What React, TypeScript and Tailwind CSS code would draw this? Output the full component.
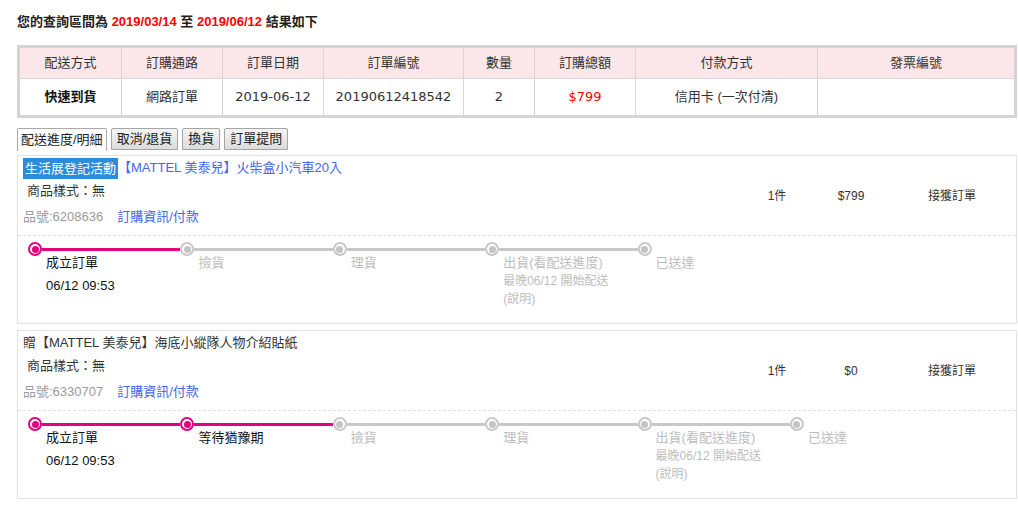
import React from 'react';

type Step = { label: string; active: boolean; extra?: string[]; date?: string };

interface OrderItem {
  badge?: string;
  prefix?: string;
  title: string;
  sku: string;
  qty: string;
  price: string;
  status: string;
  steps: Step[];
}

const SANS = "font-['Liberation_Sans','Noto_Sans_CJK_TC',sans-serif]";
const TABLE_FONT = "font-['DejaVu_Sans','Noto_Sans_CJK_TC',sans-serif]";

const shipSteps = (done: string[]): Step[] => [
  ...done.map((label, i) => ({ label, active: true, date: i === 0 ? '06/12 09:53' : undefined })),
  { label: '撿貨', active: false },
  { label: '理貨', active: false },
  { label: '出貨(看配送進度)', active: false, extra: ['最晚06/12 開始配送', '(說明)'] },
  { label: '已送達', active: false },
];

const items: OrderItem[] = [
  {
    badge: '生活展登記活動',
    title: '【MATTEL 美泰兒】火柴盒小汽車20入',
    sku: '品號:6208636',
    qty: '1件',
    price: '$799',
    status: '接獲訂單',
    steps: shipSteps(['成立訂單']),
  },
  {
    prefix: '贈',
    title: '【MATTEL 美泰兒】海底小縱隊人物介紹貼紙',
    sku: '品號:6330707',
    qty: '1件',
    price: '$0',
    status: '接獲訂單',
    steps: shipSteps(['成立訂單', '等待猶豫期']),
  },
];

const headers = ['配送方式', '訂購通路', '訂單日期', '訂單編號', '數量', '訂購總額', '付款方式', '發票編號'];

const Dot: React.FC<{ on: boolean }> = ({ on }) => (
  <div
    className={`w-[14px] h-[14px] shrink-0 rounded-full border-2 bg-white flex items-center justify-center ${
      on ? 'border-[#e4007f]' : 'border-[#c8c8c8]'
    }`}
  >
    <div className={`w-[7px] h-[7px] rounded-full ${on ? 'bg-[#e4007f]' : 'bg-[#c4c4c4]'}`} />
  </div>
);

const Timeline: React.FC<{ steps: Step[] }> = ({ steps }) => (
  <div className="flex pl-[10px] pt-[6px] h-[87px]">
    {steps.map((s, i) => (
      <div key={i} className="w-[152.4px] shrink-0 flex flex-col">
        <div className="flex items-center h-[14px]">
          <Dot on={s.active} />
          {i < steps.length - 1 && (
            <div className={`flex-1 h-[3px] ${s.active ? 'bg-[#e4007f]' : 'bg-[#c8c8c8]'}`} />
          )}
        </div>
        <div className="pl-[18px] -mt-[2px] text-[13px] leading-[18px]">
          <div className={s.active ? 'text-[#111]' : 'text-[#bdbdbd]'}>{s.label}</div>
          {s.extra?.map(t => (
            <div key={t} className="text-[#bdbdbd] text-[12px]">
              {t}
            </div>
          ))}
          {s.date && <div className="mt-[5px] text-[#111]">{s.date}</div>}
        </div>
      </div>
    ))}
  </div>
);

const ItemCard: React.FC<{ item: OrderItem }> = ({ item }) => (
  <div className="w-[1000px] border border-[#e2e2e2] bg-white">
    <div className="flex border-b border-dashed border-[#e0e0e0] pl-[5px] pt-[1px] pb-[4px]">
      <div className="flex-1">
        <div className="h-[22px] flex items-center text-[13px]">
          {item.badge && <span className="bg-[#2b8cdc] text-white px-[2px] h-[21px] leading-[21px]">{item.badge}</span>}
          {item.prefix && <span className="text-[#333]">{item.prefix}</span>}
          <span className={item.badge ? 'text-[#4366f0]' : 'text-[#333]'}>{item.title}</span>
        </div>
        <div className="h-[24px] flex items-center pl-[4px] text-[13px] text-[#333]">商品樣式：無</div>
        <div className="h-[28px] flex items-center text-[13px]">
          <span className="text-[#9a9a9a]">{item.sku}</span>
          <span className="ml-[14px] text-[#4366f0]">訂購資訊/付款</span>
        </div>
      </div>
      <div className="flex items-center pt-[3px] text-[12px] text-[#333]">
        <div className="w-[74px] text-center">{item.qty}</div>
        <div className="w-[74px] text-center">{item.price}</div>
        <div className="w-[128px] text-center">{item.status}</div>
      </div>
    </div>
    <Timeline steps={item.steps} />
  </div>
);

export default function App() {
  const row = ['快速到貨', '網路訂單', '2019-06-12', '20190612418542', '2', '$799', '信用卡 (一次付清)', ''];
  return (
    <div className={`w-[1018px] h-[510px] bg-white pl-[17px] ${SANS}`}>
      <div className="h-[45px] pt-[13px] text-[13px] font-bold text-[#222] leading-[18px]">
        您的查詢區間為 <span className="text-[#ff0000]">2019/03/14</span> 至{' '}
        <span className="text-[#ff0000]">2019/06/12</span> 結果如下
      </div>

      <div className={`w-[1000px] border-[3px] border-[#d4d4d4] text-[13px] text-[#333] ${TABLE_FONT}`}>
        <div className="grid grid-cols-[101px_101px_101px_140px_71px_101px_182px_1fr] bg-[#fbe6e9] h-[31px] border-b border-[#d6d6d6]">
          {headers.map((h, i) => (
            <div key={h} className={`flex items-center justify-center ${i > 0 ? 'border-l border-[#d6d6d6]' : ''}`}>
              {h}
            </div>
          ))}
        </div>
        <div className="grid grid-cols-[101px_101px_101px_140px_71px_101px_182px_1fr] h-[36px]">
          {row.map((c, i) => (
            <div
              key={i}
              className={`flex items-center justify-center ${i > 0 ? 'border-l border-[#d6d6d6]' : ''} ${
                i === 0 ? 'font-bold text-[#111]' : ''
              } ${i === 5 ? 'text-[#ff0000]' : ''} ${i === 6 ? SANS : ''}`}
            >
              {c}
            </div>
          ))}
        </div>
      </div>

      <div className="flex gap-[4px] mt-[10px] text-[13px] text-[#222]">
        <div className="h-[23px] px-[3px] flex items-center border border-[#aaa] border-b-0 bg-white rounded-t-[2px]">
          配送進度/明細
        </div>
        {['取消/退貨', '換貨', '訂單提問'].map(t => (
          <div
            key={t}
            className="h-[22px] px-[5px] flex items-center border border-[#a5a5a5] bg-gradient-to-b from-[#f4f4f4] to-[#dcdcdc] rounded-t-[2px]"
          >
            {t}
          </div>
        ))}
      </div>

      <div className="mt-[4px] flex flex-col gap-[6px]">
        {items.map((it, i) => (
          <ItemCard key={i} item={it} />
        ))}
      </div>
    </div>
  );
}
